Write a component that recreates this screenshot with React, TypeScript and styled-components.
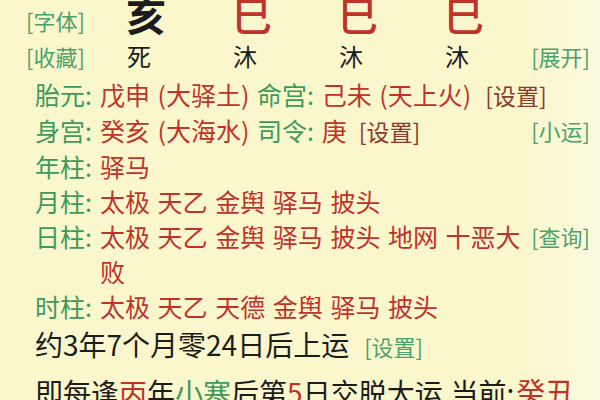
import React from "react";
import styled, { createGlobalStyle } from "styled-components";

const GREEN = "#3d9a5c";
const LINK_GREEN = "#4aa36b";
const RED = "#c0332b";
const BROWN = "#8e3a2c";
const BLACK = "#1c1c1c";

const GlobalStyle = createGlobalStyle`
  html, body { margin: 0; padding: 0; }
  body {
    width: 600px;
    height: 400px;
    overflow: hidden;
    background: linear-gradient(90deg, #faf7cd 0%, #faf7cd 88%, #fcfae0 100%);
    font-family: "Noto Sans CJK SC", "Noto Sans", sans-serif;
  }
`;

const Page = styled.div`
  width: 600px;
  height: 400px;
  overflow: hidden;
`;

const TopGrid = styled.div`
  display: grid;
  grid-template-columns: 67px repeat(4, 106px) 1fr;
  grid-template-rows: 40px 43px;
  margin-top: -6px;
  padding: 0 10px 0 26px;
`;

const TopLink = styled.span<{ $end?: boolean; $row: "top" | "bottom" }>`
  font-size: 22px;
  line-height: 28px;
  color: ${LINK_GREEN};
  white-space: nowrap;
  align-self: ${(p) => (p.$row === "top" ? "end" : "center")};
  justify-self: ${(p) => (p.$end ? "end" : "start")};
`;

const BigChar = styled.span<{ $color: string; $bold?: boolean }>`
  font-size: 40px;
  line-height: 40px;
  color: ${(p) => p.$color};
  font-weight: ${(p) => (p.$bold ? 700 : 500)};
  justify-self: center;
`;

const StateChar = styled.span`
  font-size: 24px;
  line-height: 30px;
  color: ${BLACK};
  justify-self: center;
  align-self: center;
  margin-right: 14px;
`;

const Info = styled.div`
  padding: 0 10px 0 35px;
`;

const InfoRow = styled.div`
  display: grid;
  grid-template-columns: 65px 1fr auto;
  font-size: 25px;
  line-height: 35px;
`;

const Label = styled.span`
  color: ${GREEN};
  white-space: nowrap;
`;

const Content = styled.span`
  color: ${RED};
  word-spacing: 2px;
`;

const InlineLabel = styled.span`
  color: ${GREEN};
`;

const SetLink = styled.span<{ $gap: number }>`
  font-size: 23px;
  color: ${BROWN};
  margin-left: ${(p) => p.$gap}px;
  word-spacing: 0;
`;

const SideLink = styled.span`
  font-size: 22px;
  color: ${LINK_GREEN};
  align-self: start;
  white-space: nowrap;
`;

const LuckLine = styled.div`
  font-size: 28px;
  line-height: 41px;
  color: ${BLACK};
  white-space: nowrap;
`;

const StartLine = styled.div`
  font-size: 28px;
  line-height: 48px;
  color: ${BLACK};
  white-space: nowrap;
`;

const GreenSmallLink = styled.span`
  font-size: 22px;
  color: ${LINK_GREEN};
  margin-left: 15px;
`;

const Tint = styled.span<{ $color: string; $size?: number; $gap?: number }>`
  color: ${(p) => p.$color};
  font-size: ${(p) => (p.$size ? `${p.$size}px` : "inherit")};
  margin-left: ${(p) => p.$gap ?? 0}px;
`;

const branches = [
  { ch: "亥", color: BLACK, bold: true },
  { ch: "巳", color: RED },
  { ch: "巳", color: RED },
  { ch: "巳", color: RED },
];

const states = ["死", "沐", "沐", "沐"];

export default function App() {
  return (
    <Page>
      <GlobalStyle />
      <TopGrid>
        <TopLink $row="top">[字体]</TopLink>
        {branches.map((b, i) => (
          <BigChar key={i} $color={b.color} $bold={b.bold}>
            {b.ch}
          </BigChar>
        ))}
        <span />
        <TopLink $row="bottom">[收藏]</TopLink>
        {states.map((s, i) => (
          <StateChar key={i}>{s}</StateChar>
        ))}
        <TopLink $row="bottom" $end>
          [展开]
        </TopLink>
      </TopGrid>

      <Info>
        <InfoRow>
          <Label>胎元:</Label>
          <Content>
            戊申 (大驿土) <InlineLabel>命宫:</InlineLabel> 己未 (天上火)
            <SetLink $gap={14}>[设置]</SetLink>
          </Content>
          <span />
        </InfoRow>
        <InfoRow>
          <Label>身宫:</Label>
          <Content>
            癸亥 (大海水) <InlineLabel>司令:</InlineLabel> 庚
            <SetLink $gap={12}>[设置]</SetLink>
          </Content>
          <SideLink>[小运]</SideLink>
        </InfoRow>
        <InfoRow>
          <Label>年柱:</Label>
          <Content>驿马</Content>
          <span />
        </InfoRow>
        <InfoRow>
          <Label>月柱:</Label>
          <Content>太极 天乙 金舆 驿马 披头</Content>
          <span />
        </InfoRow>
        <InfoRow>
          <Label>日柱:</Label>
          <Content>太极 天乙 金舆 驿马 披头 地网 十恶大败</Content>
          <SideLink>[查询]</SideLink>
        </InfoRow>
        <InfoRow>
          <Label>时柱:</Label>
          <Content>太极 天乙 天德 金舆 驿马 披头</Content>
          <span />
        </InfoRow>

        <LuckLine>
          约3年7个月零24日后上运<GreenSmallLink>[设置]</GreenSmallLink>
        </LuckLine>
        <StartLine>
          即每逢<Tint $color={RED}>丙</Tint>年<Tint $color={GREEN}>小寒</Tint>后第
          <Tint $color={RED}>5</Tint>日交脱大运,当前:
          <Tint $color={RED} $size={29} $gap={2}>
            癸丑
          </Tint>
        </StartLine>
      </Info>
    </Page>
  );
}
